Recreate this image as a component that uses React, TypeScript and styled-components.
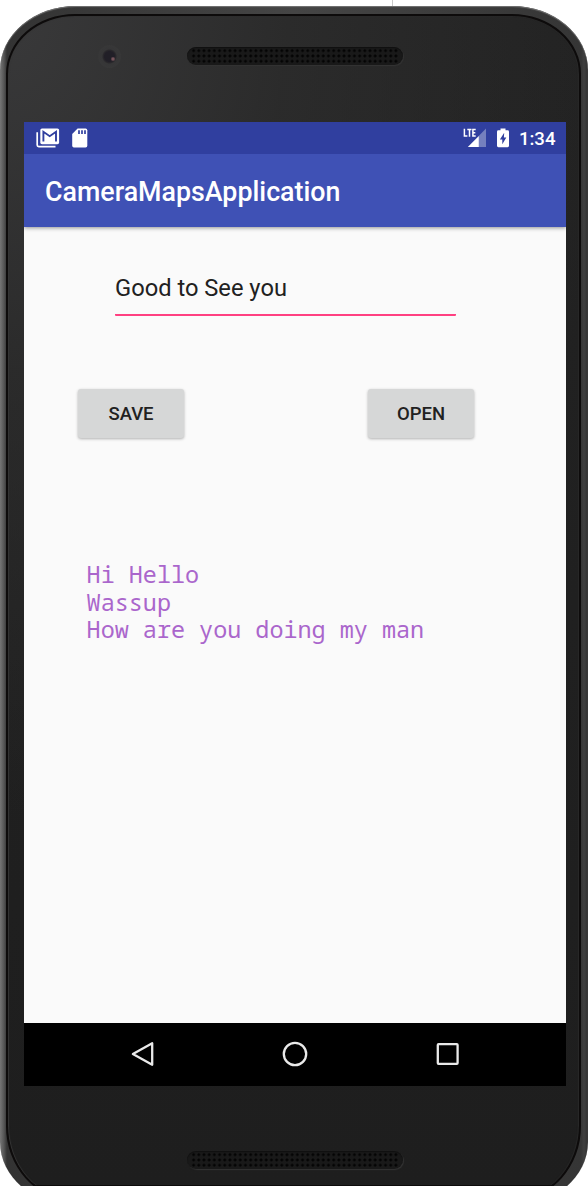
import React from "react";
import styled, { createGlobalStyle } from "styled-components";

const GlobalStyle = createGlobalStyle`
  *, *::before, *::after { box-sizing: border-box; }
  body { margin: 0; background: #fff; font-family: Roboto, "Noto Sans", sans-serif; }
`;

const Page = styled.div`
  position: relative;
  width: 588px;
  height: 1186px;
  overflow: hidden;
  background: #fff;
`;

const GuideLine = styled.div`
  width: 1px;
  height: 6px;
  margin-left: 392px;
  background: #c9c9c9;
`;

const Shell = styled.div`
  height: 1200px;
  padding: 8px 7px 7px 6px;
  border-radius: 76px / 64px;
  background: linear-gradient(90deg, #777 0, #555 4px, #333 7px, #454545 50%, #353535 581px, #3f3f3f 584px, #303030 100%);
  box-shadow: inset 0 1px 1px #757575;
`;

const Face = styled.div`
  display: flex;
  flex-direction: column;
  align-items: center;
  height: 1186px;
  padding: 0 1px 0 4px;
  overflow: hidden;
  border: 2px solid #0d0b0b;
  border-radius: 69px 69px 66px 66px / 60px 60px 74px 74px;
  background: radial-gradient(ellipse 620px 800px at 0 0, #39393a 0, rgba(46, 46, 46, 0.75) 45%, rgba(32, 32, 32, 0) 100%),
    linear-gradient(180deg, #222 0, #1e1e1e 100%);
  box-shadow: inset 1px 0 1px #363636, inset -1px 0 1px #292929;
`;

const Forehead = styled.div`
  position: relative;
  display: flex;
  justify-content: center;
  width: 100%;
  height: 106px;
  flex: none;
  padding-top: 31px;
`;

const Camera = styled.div`
  position: absolute;
  top: 29px;
  left: 86px;
  width: 23px;
  height: 23px;
  border-radius: 50%;
  background: radial-gradient(circle at 15px 14px, #77545b 0 1px, transparent 2.5px),
    radial-gradient(circle, #211f27 0 5px, #2a292c 6.5px, #363637 7.5px, #393939 100%);
`;

const Grille = styled.div`
  width: 216px;
  height: 18px;
  padding: 1px 4px;
  border-radius: 9px;
  background: #191919;
  box-shadow: 1px 1px 1px #333, inset 0 1px 1px #101010;

  &::before {
    content: "";
    display: block;
    height: 16px;
    background: radial-gradient(circle, #040404 0 1.1px, transparent 1.7px) 0 0 / 5.2px 5.3px;
  }
`;

const Screen = styled.div`
  display: flex;
  flex-direction: column;
  width: 542px;
  height: 964px;
  flex: none;
  background: #fafafa;
`;

const StatusBar = styled.div`
  display: flex;
  justify-content: space-between;
  height: 32px;
  padding: 0 10.5px 0 12px;
  background: #303f9f;
`;

const StatusGroup = styled.div<{ $gap: number }>`
  display: flex;
  align-items: center;
  gap: ${(p) => p.$gap}px;
`;

const Clock = styled.span`
  color: #fff;
  font-size: 18.6px;
  font-weight: 500;
  line-height: 32px;
  padding-top: 2px;
`;

const AppBar = styled.header`
  display: flex;
  align-items: center;
  height: 73px;
  padding: 2px 21px 0;
  background: #3f51b5;
  box-shadow: 0 1px 4px rgba(0, 0, 0, 0.42);
  clip-path: inset(0 0 -6px 0);
`;

const Title = styled.h1`
  margin: 0;
  color: #fff;
  font-size: 26.8px;
  font-weight: 500;
  line-height: 32px;
`;

const Content = styled.main`
  flex: 1;
`;

const TextField = styled.div`
  width: 341px;
  height: 49px;
  margin: 40px 0 0 91px;
  padding-top: 5px;
  border-bottom: 2px solid #ff4081;
  border-radius: 1px;
  color: #212121;
  font-size: 23.7px;
  line-height: 32px;
`;

const ButtonRow = styled.div`
  display: flex;
  justify-content: space-between;
  width: 396px;
  margin: 73px 0 0 54px;
`;

const Button = styled.button`
  width: 106px;
  height: 49px;
  padding: 1px 0 0;
  border: 0;
  border-radius: 3px;
  background: #d6d7d7;
  box-shadow: 0 1px 3px rgba(0, 0, 0, 0.3);
  color: #212121;
  font-family: inherit;
  font-size: 18.5px;
  font-weight: 500;
`;

const Message = styled.pre`
  margin: 123px 0 0 62.6px;
  color: #aa66cc;
  font-family: "Droid Sans Mono", "Noto Sans Mono", "DejaVu Sans Mono", monospace;
  font-size: 23.45px;
  line-height: 27.5px;
`;

const NavBar = styled.nav`
  display: flex;
  align-items: center;
  justify-content: center;
  gap: 124.5px;
  height: 63px;
  padding-bottom: 1px;
  background: #000;
`;

const Chin = styled.div`
  display: flex;
  justify-content: center;
  width: 100%;
  height: 100px;
  flex: none;
  padding-top: 65px;
  border-bottom: 1px solid #0d0b0b;
`;

const MailIcon = () => (
  <svg width="24" height="20" viewBox="0 0 24 20">
    <path d="M1.2 4.2V17q0 1.6 1.6 1.6H19.5" fill="none" stroke="#fff" strokeWidth="1.7" />
    <rect x="4.3" y="0.4" width="18.8" height="15.8" rx="1.7" fill="#fff" />
    <path d="M7.4 13.6V3.8L13.7 8.2L20 3.8V13.6" fill="none" stroke="#303f9f" strokeWidth="1.9" />
  </svg>
);

const CardIcon = () => (
  <svg width="16" height="20" viewBox="0 0 16 20">
    <path d="M5.6.5H13.6Q15.3.5 15.3 2.2V17.8Q15.3 19.5 13.6 19.5H1.9Q.2 19.5.2 17.8V6Z" fill="#fff" />
    <path d="M7 2.3V6M10 2.3V6M13 2.3V6" stroke="#303f9f" strokeWidth="1.7" />
  </svg>
);

const SignalIcon = () => (
  <svg width="24" height="20" viewBox="0 0 24 20">
    <path d="M23 .5V19H15.7V8Z" fill="#7580be" />
    <path d="M4.8 19L15.8 8V19Z" fill="#fff" />
    <path d="M1.4 .8V8H4.4M4.3 1.5H8.5M6.5 1.5V8.7M12.7 1.5H9.9V8H12.7M9.9 4.7H12.3" fill="none" stroke="#fff" strokeWidth="1.5" />
  </svg>
);

const BatteryIcon = () => (
  <svg width="12" height="20" viewBox="0 0 12 20">
    <path d="M3.5.5H8.5V2.3H10.6Q12 2.3 12 3.7V17.8Q12 19.2 10.6 19.2H1.4Q0 19.2 0 17.8V3.7Q0 2.3 1.4 2.3H3.5Z" fill="#fff" />
    <path d="M7.2 4.7L2.9 11.4H5.3V16.2L9.3 9.6H6.9Z" fill="#303f9f" />
  </svg>
);

const BackIcon = () => (
  <svg width="28" height="28" viewBox="0 0 28 28">
    <path d="M23.2 3.2V24.8L3.9 14Z" fill="none" stroke="#e9e9e9" strokeWidth="2.3" strokeLinejoin="round" />
  </svg>
);

const HomeIcon = () => (
  <svg width="28" height="28" viewBox="0 0 28 28">
    <circle cx="14" cy="14" r="11.2" fill="none" stroke="#e9e9e9" strokeWidth="2.3" />
  </svg>
);

const RecentsIcon = () => (
  <svg width="28" height="28" viewBox="0 0 28 28">
    <rect x="3.8" y="4.1" width="19.8" height="19.8" rx="0.8" fill="none" stroke="#e9e9e9" strokeWidth="2.3" />
  </svg>
);

export default function App() {
  return (
    <Page>
      <GlobalStyle />
      <GuideLine />
      <Shell>
        <Face>
          <Forehead>
            <Camera />
            <Grille />
          </Forehead>
          <Screen>
            <StatusBar>
              <StatusGroup $gap={12}>
                <MailIcon />
                <CardIcon />
              </StatusGroup>
              <StatusGroup $gap={10}>
                <SignalIcon />
                <BatteryIcon />
                <Clock>1:34</Clock>
              </StatusGroup>
            </StatusBar>
            <AppBar>
              <Title>CameraMapsApplication</Title>
            </AppBar>
            <Content>
              <TextField>Good to See you</TextField>
              <ButtonRow>
                <Button>SAVE</Button>
                <Button>OPEN</Button>
              </ButtonRow>
              <Message>{"Hi Hello\nWassup\nHow are you doing my man"}</Message>
            </Content>
            <NavBar>
              <BackIcon />
              <HomeIcon />
              <RecentsIcon />
            </NavBar>
          </Screen>
          <Chin>
            <Grille />
          </Chin>
        </Face>
      </Shell>
    </Page>
  );
}
